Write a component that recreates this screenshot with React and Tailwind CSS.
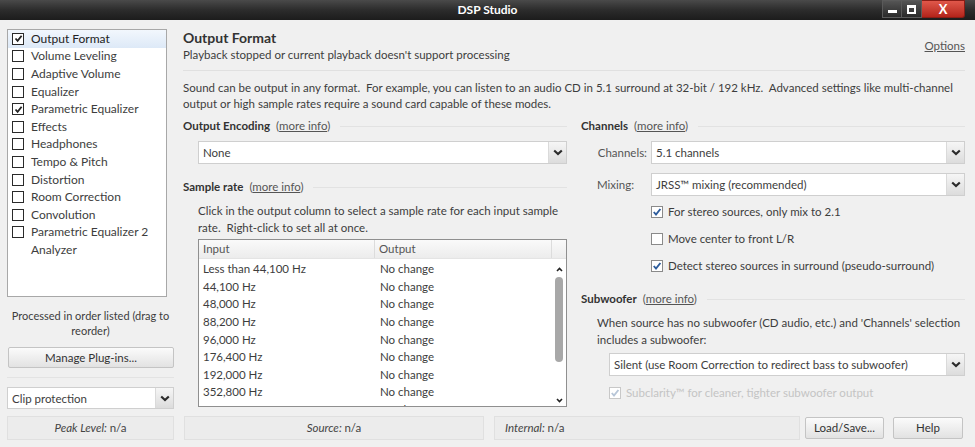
const plugins = [
  ["Output Format", true],
  ["Volume Leveling", false],
  ["Adaptive Volume", false],
  ["Equalizer", false],
  ["Parametric Equalizer", true],
  ["Effects", false],
  ["Headphones", false],
  ["Tempo & Pitch", false],
  ["Distortion", false],
  ["Room Correction", false],
  ["Convolution", false],
  ["Parametric Equalizer 2", false],
  ["Analyzer", null],
];

const rates = [
  "Less than 44,100 Hz",
  "44,100 Hz",
  "48,000 Hz",
  "88,200 Hz",
  "96,000 Hz",
  "176,400 Hz",
  "192,000 Hz",
  "352,800 Hz",
  "384,000 Hz",
];

const Chevron = () => (
  <svg width="10" height="7" viewBox="0 0 10 7">
    <path d="M1.2 1.5 L5 5 L8.8 1.5" fill="none" stroke="#2b2b2b" strokeWidth="2.2" />
  </svg>
);

const Select = ({ value, className = "" }) => (
  <div className={`flex h-[23px] border border-[#cfcfcf] bg-white ${className}`}>
    <div className="flex-1 truncate px-[4px] leading-[21px]">{value}</div>
    <div className="flex w-[18px] items-center justify-center border-l border-[#dadada] bg-gradient-to-b from-[#f6f6f6] to-[#dcdcdc]">
      <Chevron />
    </div>
  </div>
);

// dark box used in the plug-in list
const ListCheck = ({ checked }) => (
  <div className="flex h-[12px] w-[12px] items-center justify-center border-[1.5px] border-[#2a2a2a] bg-white">
    {checked && (
      <svg width="9" height="9" viewBox="0 0 9 9">
        <path d="M1.5 4.5 L3.6 6.8 L7.6 1.8" fill="none" stroke="#222" strokeWidth="1.8" />
      </svg>
    )}
  </div>
);

// lighter box with blue tick, used in the settings
const Check = ({ checked, disabled, label }) => (
  <div className={`flex items-center gap-[5px] whitespace-nowrap ${disabled ? "text-[#c4c4c4]" : ""}`}>
    <div
      className={`flex h-[12px] w-[12px] items-center justify-center border bg-white ${
        disabled ? "border-[#c8c8c8]" : "border-[#8a8a8a]"
      }`}
    >
      {checked && (
        <svg width="10" height="10" viewBox="0 0 10 10">
          <path
            d="M1.8 5 L4 7.6 L8.4 2"
            fill="none"
            stroke={disabled ? "#b7c6d8" : "#2d5c9c"}
            strokeWidth="1.9"
          />
        </svg>
      )}
    </div>
    <span>{label}</span>
  </div>
);

const Heading = ({ title }) => (
  <div className="flex h-[16px] items-center gap-[6px] whitespace-nowrap">
    <span className="font-bold text-[#333]">{title}</span>
    <span className="text-[#555]">
      (<span className="underline">more info</span>)
    </span>
    <div className="ml-[4px] flex-1 border-t border-[#e2e2e2]" />
  </div>
);

const Box = ({ className = "", children }) => (
  <div
    className={`flex h-[24px] items-center justify-center border border-[#e0e0e0] bg-[#ececec] italic text-[#444] ${className}`}
  >
    {children}
  </div>
);

const Button = ({ className = "", children }) => (
  <div
    className={`flex items-center justify-center rounded-[2px] border border-[#c4c4c4] bg-gradient-to-b from-[#fbfbfb] to-[#e2e2e2] text-[#333] ${className}`}
  >
    {children}
  </div>
);

export default function App() {
  return (
    <div className="h-[447px] w-[975px] overflow-hidden bg-[#f0f0f0] font-['Lato','Liberation_Sans',sans-serif] text-[11.5px] text-[#3d3d3d]">
      {/* title bar */}
      <div className="relative flex h-[20px] items-center justify-center bg-gradient-to-b from-[#4a4a4a] via-[#2c2c2c] to-[#1c1c1c]">
        <span className="text-[12px] font-bold text-white">DSP Studio</span>
        <div className="absolute right-[10px] top-0 flex h-[18px]">
          <div className="flex w-[20px] items-end justify-center border border-[#5a5a5a] bg-gradient-to-b from-[#555] to-[#2a2a2a] pb-[4px]">
            <div className="h-[3px] w-[9px] bg-white" />
          </div>
          <div className="flex w-[20px] items-center justify-center border border-l-0 border-[#5a5a5a] bg-gradient-to-b from-[#555] to-[#2a2a2a]">
            <div className="h-[9px] w-[9px] border-2 border-t-[3px] border-white" />
          </div>
          <div className="flex w-[43px] items-center justify-center rounded-br-[3px] border border-l-0 border-[#8a1d16] bg-gradient-to-b from-[#e0574a] to-[#b3231a] text-[13px] font-bold leading-none text-white">
            X
          </div>
        </div>
      </div>

      <div className="flex h-[396px] overflow-hidden">
        {/* left panel */}
        <div className="flex w-[183px] shrink-0 flex-col pl-[7px] pr-[9px] pt-[9px]">
          <div className="h-[268px] w-[160px] shrink-0 border border-[#a8a8a8] bg-white">
            {plugins.map(([name, checked], i) => (
              <div
                key={name}
                className={`flex h-[17.6px] items-center gap-[7px] pl-[4px] text-[12px] ${
                  i === 0 ? "bg-gradient-to-b from-[#f2f7fd] to-[#dde9f7]" : ""
                }`}
              >
                {checked === null ? <div className="w-[12px]" /> : <ListCheck checked={checked} />}
                <span className={i === 0 ? "text-[#222]" : ""}>{name}</span>
              </div>
            ))}
          </div>
          <div className="mt-[11px] whitespace-nowrap text-center text-[11px] leading-[15px]">
            Processed in order listed (drag to
            <br />
            reorder)
          </div>
          <Button className="ml-[1px] mt-[9px] h-[21px] shrink-0">Manage Plug-ins...</Button>
          <div className="mt-[9px] border-t border-[#e3e3e3]" />
          <Select value="Clip protection" className="mt-[9px] !h-[22px] shrink-0" />
        </div>

        {/* main panel */}
        <div className="flex w-[782px] flex-col pt-[9px]">
          <div className="flex items-start justify-between">
            <div>
              <div className="text-[14px] font-bold leading-[18px] text-[#333]">Output Format</div>
              <div className="whitespace-nowrap leading-[16px]">
                Playback stopped or current playback doesn't support processing
              </div>
            </div>
            <div className="mt-[8px] text-[#555] underline">Options</div>
          </div>
          <div className="mt-[7px] border-t border-[#e0e0e0]" />
          <div className="mt-[9px] whitespace-nowrap leading-[16px]">
            Sound can be output in any format.&nbsp; For example, you can listen to an audio CD in 5.1 surround at
            32-bit / 192 kHz.&nbsp; Advanced settings like multi-channel
            <br />
            output or high sample rates require a sound card capable of these modes.
          </div>

          <div className="mt-[6px] flex gap-[14px]">
            {/* left column */}
            <div className="flex w-[384px] flex-col">
              <Heading title="Output Encoding" />
              <Select value="None" className="ml-[15px] mt-[7px]" />
              <div className="mt-[15px]">
                <Heading title="Sample rate" />
              </div>
              <div className="ml-[15px] mt-[7px] whitespace-nowrap leading-[17px]">
                Click in the output column to select a sample rate for each input sample
                <br />
                rate.&nbsp; Right-click to set all at once.
              </div>
              <div className="ml-[15px] mt-[3px] h-[168px] overflow-hidden border border-[#8f8f8f] bg-white">
                <div className="flex h-[19px] items-center border-b border-[#e4e4e4] bg-gradient-to-b from-[#fafafa] to-[#ececec] text-[#555]">
                  <div className="w-[176px] border-r border-[#dcdcdc] pl-[4px]">Input</div>
                  <div className="flex-1 border-r border-[#dcdcdc] pl-[4px]">Output</div>
                  <div className="w-[14px]" />
                </div>
                <div className="flex">
                  <div className="flex-1 pt-[1px]">
                    {rates.map((r) => (
                      <div key={r} className="flex h-[17.6px] items-center">
                        <div className="w-[176px] pl-[4px]">{r}</div>
                        <div className="pl-[5px]">No change</div>
                      </div>
                    ))}
                  </div>
                  {/* scrollbar */}
                  <div className="flex w-[14px] flex-col items-center pt-[8px]">
                    <svg width="7" height="5" viewBox="0 0 7 5">
                      <path d="M1 4 L3.5 1.5 L6 4" fill="none" stroke="#222" strokeWidth="1.6" />
                    </svg>
                    <div className="mt-[5px] h-[85px] w-[8px] rounded-[4px] bg-[#a8a8a8]" />
                    <svg width="7" height="5" viewBox="0 0 7 5" className="mt-[36px]">
                      <path d="M1 1 L3.5 3.5 L6 1" fill="none" stroke="#222" strokeWidth="1.6" />
                    </svg>
                  </div>
                </div>
              </div>
            </div>

            {/* right column */}
            <div className="flex w-[384px] flex-col">
              <Heading title="Channels" />
              <div className="mt-[7px] flex items-center">
                <span className="w-[70px] pr-[4px] text-right text-[#555]">Channels:</span>
                <Select value="5.1 channels" className="flex-1" />
              </div>
              <div className="mt-[9px] flex items-center">
                <span className="w-[70px] pl-[16px] text-[#555]">Mixing:</span>
                <Select value="JRSS™ mixing (recommended)" className="flex-1" />
              </div>
              <div className="ml-[70px] mt-[8px] flex flex-col gap-[11px] leading-[16px]">
                <Check checked label="For stereo sources, only mix to 2.1" />
                <Check label="Move center to front L/R" />
                <Check checked label="Detect stereo sources in surround (pseudo-surround)" />
              </div>
              <div className="mt-[17px]">
                <Heading title="Subwoofer" />
              </div>
              <div className="ml-[16px] mt-[7px] whitespace-nowrap leading-[17px]">
                When source has no subwoofer (CD audio, etc.) and 'Channels' selection
                <br />
                includes a subwoofer:
              </div>
              <Select
                value="Silent (use Room Correction to redirect bass to subwoofer)"
                className="ml-[28px] mt-[5px]"
              />
              <div className="ml-[28px] mt-[8px]">
                <Check checked disabled label="Subclarity™ for cleaner, tighter subwoofer output" />
              </div>
            </div>
          </div>
        </div>
      </div>

      {/* status bar */}
      <div className="flex items-center pl-[7px] pr-[12px]">
        <Box className="w-[167px]">
          <span>Peak Level:</span>&nbsp;<span className="not-italic">n/a</span>
        </Box>
        <Box className="ml-[10px] w-[300px]">
          <span>Source:</span>&nbsp;<span className="not-italic">n/a</span>
        </Box>
        <Box className="ml-[10px] w-[306px] !justify-start pl-[10px]">
          <span>Internal:</span>&nbsp;<span className="not-italic">n/a</span>
        </Box>
        <Button className="ml-[5px] h-[22px] w-[79px]">Load/Save...</Button>
        <Button className="ml-[9px] h-[22px] w-[70px]">Help</Button>
      </div>
    </div>
  );
}
